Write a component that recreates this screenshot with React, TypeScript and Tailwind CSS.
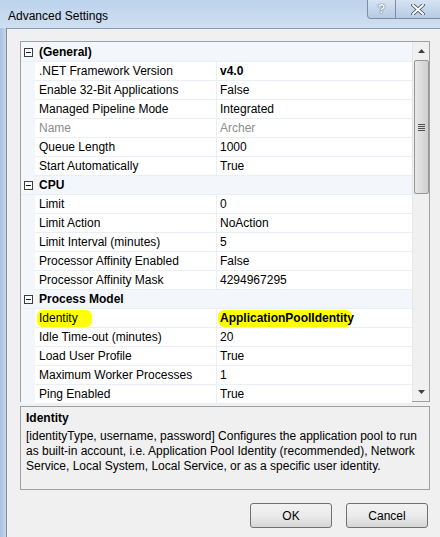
import React from "react";

type Row = { name: string; value: string; bold?: boolean; gray?: boolean; hl?: boolean };
type Cat = { title: string; rows: Row[] };

const cats: Cat[] = [
  {
    title: "(General)",
    rows: [
      { name: ".NET Framework Version", value: "v4.0", bold: true },
      { name: "Enable 32-Bit Applications", value: "False" },
      { name: "Managed Pipeline Mode", value: "Integrated" },
      { name: "Name", value: "Archer", gray: true },
      { name: "Queue Length", value: "1000" },
      { name: "Start Automatically", value: "True" },
    ],
  },
  {
    title: "CPU",
    rows: [
      { name: "Limit", value: "0" },
      { name: "Limit Action", value: "NoAction" },
      { name: "Limit Interval (minutes)", value: "5" },
      { name: "Processor Affinity Enabled", value: "False" },
      { name: "Processor Affinity Mask", value: "4294967295" },
    ],
  },
  {
    title: "Process Model",
    rows: [
      { name: "Identity", value: "ApplicationPoolIdentity", bold: true, hl: true },
      { name: "Idle Time-out (minutes)", value: "20" },
      { name: "Load User Profile", value: "True" },
      { name: "Maximum Worker Processes", value: "1" },
      { name: "Ping Enabled", value: "True" },
    ],
  },
];

function MinusBox() {
  return (
    <div className="w-[9px] h-[9px] border border-[#3c3c3c] bg-white flex items-center justify-center">
      <div className="w-[5px] h-[1px] bg-[#1a1a1a]" />
    </div>
  );
}

export default function App() {
  return (
    <div
      className="relative w-[440px] h-[537px] overflow-hidden bg-[#f0f0f0] text-[12px] text-black"
      style={{ fontFamily: '"Liberation Sans", Arial, sans-serif' }}
    >
      {/* title bar */}
      <div className="h-[28px] bg-gradient-to-b from-[#bcd3ec] to-[#cfdff1] flex items-start relative">
        <div className="pl-[8px] pt-[7px] text-[12px] text-black">Advanced Settings</div>
        <div className="absolute left-[367px] top-0 w-[29px] h-[19px] border border-[#7c8ea6] border-t-0 rounded-bl-[4px] bg-gradient-to-b from-[#d6e3f2] to-[#b7cbe3] flex items-center justify-center text-[13px] font-bold text-white" style={{ textShadow: "0 0 1px #3a4b60, 0 0 1px #3a4b60" }}>
          ?
        </div>
        <div className="absolute left-[395px] top-0 w-[46px] h-[19px] border border-[#7c8ea6] border-t-0 bg-gradient-to-b from-[#d6e3f2] to-[#b7cbe3] flex items-center justify-center">
          <svg width="14" height="11" viewBox="0 0 14 11">
            <path d="M2 1 L12 10 M12 1 L2 10" stroke="#3a4b60" strokeWidth="3.6" strokeLinecap="round" />
            <path d="M2 1 L12 10 M12 1 L2 10" stroke="#ffffff" strokeWidth="2" strokeLinecap="round" />
          </svg>
        </div>
      </div>

      {/* left frame */}
      <div className="absolute left-0 top-[28px] w-[7px] h-[509px] bg-gradient-to-r from-[#a9c1df] to-[#c4d6ec] border-r border-[#7d8ea5]" />
      {/* client top border */}
      <div className="absolute left-[7px] top-[28px] w-[433px] h-[1px] bg-[#8c9bb1]" />

      {/* property grid */}
      <div className="absolute left-[20px] top-[41px] w-[410px] h-[361px] border border-[#a0a0a0] bg-[#f3f6fb] flex">
        <div className="w-[391px] flex flex-col pt-[1px]">
          {cats.map((c) => (
            <React.Fragment key={c.title}>
              <div className="h-[19px] bg-[#f3f6fb] border-b border-[#eaeef5] flex items-center shrink-0">
                <div className="w-[14px] flex justify-center pl-[1px]">
                  <MinusBox />
                </div>
                <div className="pl-[4px] font-bold">{c.title}</div>
              </div>
              {c.rows.map((r) => (
                <div key={r.name} className="h-[19px] flex bg-[#f3f6fb] shrink-0">
                  <div className="w-[14px]" />
                  <div className="w-[182px] bg-white border-r border-b border-[#eaeef5] flex items-center pl-[4px] relative">
                    {r.hl && <div className="absolute left-[2px] top-[1px] w-[55px] h-[17px] bg-[#ffff00] rounded-[6px]" />}
                    <span className={"relative " + (r.gray ? "text-[#8d8d8d]" : "")}>{r.name}</span>
                  </div>
                  <div className="flex-1 bg-white border-b border-[#eaeef5] flex items-center pl-[3px] relative">
                    {r.hl && <div className="absolute left-[1px] top-[1px] w-[134px] h-[17px] bg-[#ffff00] rounded-[6px]" />}
                    <span className={"relative " + (r.bold ? "font-bold " : "") + (r.gray ? "text-[#8d8d8d]" : "")}>{r.value}</span>
                  </div>
                </div>
              ))}
            </React.Fragment>
          ))}
        </div>
        {/* scrollbar */}
        <div className="w-[17px] bg-[#f0f0f0] border-l border-[#e6e6e6] flex flex-col items-center relative">
          <div className="h-[18px] flex items-center justify-center">
            <svg width="7" height="4" viewBox="0 0 7 4"><path d="M3.5 0 L7 4 L0 4 Z" fill="#404040" /></svg>
          </div>
          <div className="w-[15px] h-[134px] border border-[#979797] rounded-[2px] bg-gradient-to-r from-[#e8e8e8] via-[#dcdcdc] to-[#cfcfcf] flex items-center justify-center">
            <div className="flex flex-col gap-[1px]">
              <div className="w-[7px] h-[1px] bg-[#505050]" />
              <div className="w-[7px] h-[1px] bg-[#505050]" />
              <div className="w-[7px] h-[1px] bg-[#505050]" />
              <div className="w-[7px] h-[1px] bg-[#505050]" />
            </div>
          </div>
          <div className="flex-1" />
          <div className="h-[18px] flex items-center justify-center">
            <svg width="7" height="4" viewBox="0 0 7 4"><path d="M0 0 L7 0 L3.5 4 Z" fill="#404040" /></svg>
          </div>
        </div>
      </div>

      {/* description */}
      <div className="absolute left-[20px] top-[406px] w-[410px] h-[84px] border border-[#a0a0a0] bg-[#f0f0f0] px-[5px] pt-[4px] leading-[15px]">
        <div className="font-bold">Identity</div>
        <div className="mt-[3px]">
          [identityType, username, password] Configures the application pool to run as built-in account, i.e. Application Pool Identity (recommended), Network Service, Local System, Local Service, or as a specific user identity.
        </div>
      </div>

      {/* buttons */}
      <div className="absolute left-[250px] top-[503px] w-[82px] h-[25px] border border-[#707070] rounded-[3px] bg-gradient-to-b from-[#f2f2f2] via-[#ebebeb] to-[#d6d6d6] flex items-center justify-center">
        OK
      </div>
      <div className="absolute left-[346px] top-[503px] w-[82px] h-[25px] border border-[#707070] rounded-[3px] bg-gradient-to-b from-[#f2f2f2] via-[#ebebeb] to-[#d6d6d6] flex items-center justify-center">
        Cancel
      </div>
    </div>
  );
}
